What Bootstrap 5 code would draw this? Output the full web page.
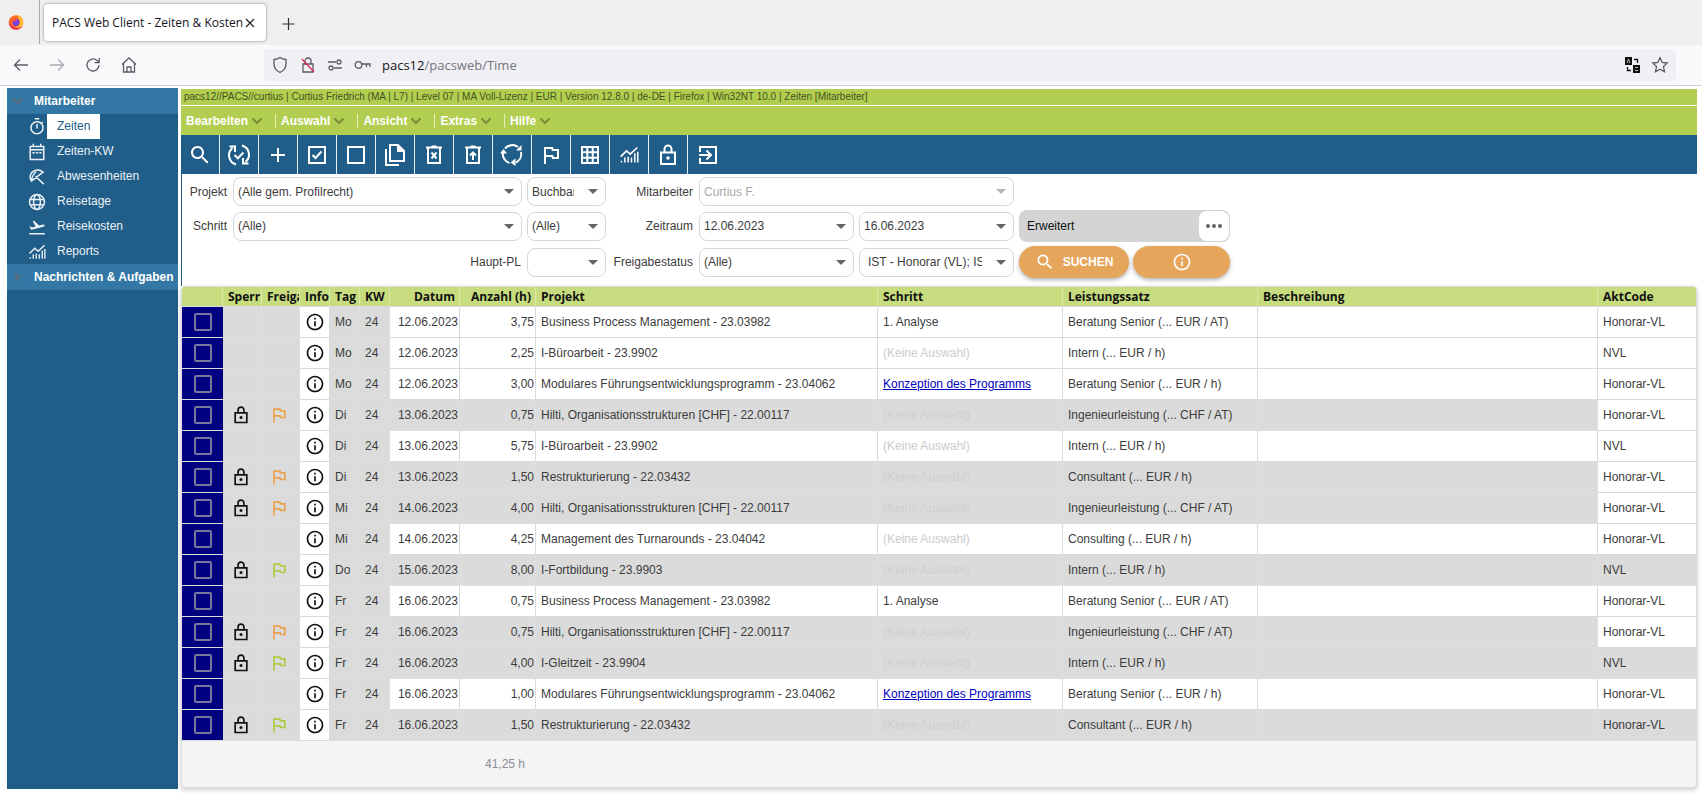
<!DOCTYPE html>
<html lang="de">
<head>
<meta charset="utf-8">
<meta name="viewport" content="width=device-width, initial-scale=1">
<title>PACS Web Client - Zeiten &amp; Kosten</title>
<link href="https://cdn.jsdelivr.net/npm/bootstrap@5.3.0/dist/css/bootstrap.min.css" rel="stylesheet">
<style>
  :root { --blue: #205d88; --blue-light: #3378a4; --lime: #b2ce50; --lime-head: #c6dc7e; --line: #dadada; --locked: #dbdbdb; --orange: #e5a55b; }
  body { font-family: "Liberation Sans", Arial, sans-serif; font-size: 12px; line-height: 16px; color: #3c3c3c; background: #fff; }
  svg { display: block; flex: none; }
  .ico { width: 24px; height: 24px; fill: currentColor; }
  .ico-20 { width: 20px; height: 20px; fill: currentColor; }
  .ln { fill: none; stroke: currentColor; stroke-width: 2; }
  .thin { fill: none; stroke: currentColor; stroke-width: 1.3; }
  button { font: inherit; color: inherit; background: none; border: 0; padding: 0; }

  .tabstrip { height: 45px; background: #efefef; font-family: "Open Sans", "Noto Sans", sans-serif; color: #15141a; }
  .tabstrip-pin { width: 40px; height: 44px; padding-left: 8px; border-right: 1px solid #aaa; }
  .browser-tab { width: 222px; height: 37px; margin: 4px 0 0 4px; padding: 0 11px 0 8px; background: #fff; border-radius: 4px; box-shadow: 0 0 3px rgba(0,0,0,.45); }
  .urlrow { height: 41px; background: #f9f9fb; border-bottom: 1px solid #cfcfdb; padding: 0 26px 0 12px; color: #5b5b66; }
  .urlrow-nav { width: 252px; gap: 18px; }
  .urlbar { height: 32px; background: #f0f0f4; border-radius: 4px; padding: 0 7px; gap: 11px; }
  .addr { font-family: "Open Sans", "Noto Sans", sans-serif; font-size: 13px; color: #75757f; }
  .addr b { font-weight: 400; color: #15141a; }

  .workspace { gap: 3px; padding: 2px 5px 7px 7px; }
  .side { width: 171px; background: var(--blue); color: #fff; }
  .side-group { height: 26px; width: 100%; background: var(--blue-light); font-weight: 700; white-space: nowrap; padding-left: 3px; }
  .side-group svg { color: #5d6b7a; margin-right: 8px; }
  .side-item { height: 25px; padding-left: 21px; color: #e9f1f6; text-decoration: none; }
  .side-item span { padding: 0 10px; line-height: 25px; }
  .side-item.active span { background: #fff; color: var(--blue); }
  .side-item svg { width: 18px; height: 18px; margin-right: 1px; }

  .pane { min-width: 0; padding-top: 1px; }
  .statusline { height: 16px; background: var(--lime); color: #44521f; font-size: 10px; line-height: 16px; padding-left: 3px; white-space: nowrap; margin-bottom: 1px; }
  .menubar { height: 29px; background: var(--lime); color: #fff; font-weight: 700; }
  .menubar button { height: 14px; line-height: 14px; font-weight: 700; padding: 0 12px 0 5px; border-right: 1px solid #e3eeb9; }
  .menubar button:last-child { border: 0; }
  .menubar svg { margin-left: 3px; color: #7b8d3a; }
  .toolstrip { height: 39px; background: var(--blue); color: #fff; }
  .toolstrip button { width: 39px; border-right: 1px solid #e8eff3; }
  .toolstrip button:last-child { border: 0; }

  .filters { display: grid; grid-template-columns: 46px 289px 79px 83px 155px 155px 211px; gap: 4px 5px; padding: 3px 0 8px 0; align-items: center; border-left: 1px solid #205d88; }
  .filters label { text-align: right; white-space: nowrap; padding-right: 1px; }
  .filters .two-wide { grid-column: span 2; }
  .filters .form-select { height: 29px; font-size: 12px; line-height: 16px; padding: 0 31px 0 4px; border: 1px solid #d4d7dc; border-radius: 8px; color: #3c3c3c; background-color: #fff; background-size: 10px 5px; background-position: right 7px center; text-overflow: clip;
    background-image: url("data:image/svg+xml,%3Csvg xmlns='http://www.w3.org/2000/svg' viewBox='0 0 10 5'%3E%3Cpath d='M0 0h10L5 5z' fill='%23666'/%3E%3C/svg%3E"); }
  .filters .form-select:disabled { color: #a9a9a9; opacity: 1; background-image: url("data:image/svg+xml,%3Csvg xmlns='http://www.w3.org/2000/svg' viewBox='0 0 10 5'%3E%3Cpath d='M0 0h10L5 5z' fill='%23b5b5b5'/%3E%3C/svg%3E"); }
  .extended { height: 32px; background: #d4d4d5; border-radius: 8px; padding: 1px 1px 1px 8px; color: #111; }
  .extended button { width: 30px; height: 30px; background: #fff; border-radius: 8px; color: #666; }
  .pill { height: 32px; border-radius: 16px; background: var(--orange); color: #fff; font-weight: 700; box-shadow: 0 2px 4px rgba(0,0,0,.3); }
  .pill-info { width: 97px; }

  .gridcard { border: 1px solid #d9dcdc; border-radius: 4px; background: #f4f4f4; box-shadow: 0 2px 5px rgba(0,0,0,.2); overflow: hidden; }
  .timegrid { table-layout: fixed; border-collapse: separate; border-spacing: 0; margin: 0; width: 100%; white-space: nowrap; color: #3c3c3c; }
  .w-tick { width: 41px; } .w-lock { width: 39px; } .w-flag { width: 38px; } .w-tiny { width: 30px; }
  .w-date { width: 70px; } .w-hours { width: 76px; } .w-project { width: 342px; } .w-step { width: 185px; } .w-rate { width: 195px; } .w-code { width: 98px; }
  .timegrid th { height: 20px; padding: 0 4px 0 5px; font: 700 12px/19px "Open Sans", "Noto Sans", sans-serif; color: #111; background: var(--lime-head); border-right: 1px solid #d9e8a9; border-bottom: 1px solid var(--line); overflow: hidden; }
  .timegrid th.snug { padding-right: 0; }
  .timegrid td { height: 31px; padding: 0 5px; background: #fff; border-right: 1px solid var(--line); border-bottom: 1px solid var(--line); vertical-align: middle; overflow: hidden; }
  .timegrid th:last-child, .timegrid td:last-child { border-right: 0; }
  .timegrid .numcell { text-align: right; padding: 0 1px; }
  .timegrid .fixedcell, .timegrid .is-locked .lockable { background: var(--locked); border-right-color: #dfdfdf; border-bottom-color: #dfdfdf; }
  .timegrid .tickcell { background: #000080; border-right: 0; padding: 0; }
  .timegrid .centercell { padding: 0; }
  .timegrid .fixedcell.centercell { padding-right: 3px; }
  .timegrid .centercell svg { margin: 0 auto; }
  .timegrid .faint { color: #cbcbcb; }
  .timegrid .is-locked .faint { color: #cfcfcf; }
  .timegrid a { color: #0000c0; }
  .timegrid input { display: block; appearance: none; width: 18px; height: 18px; margin: 0 auto; border: 2px solid #78789c; border-radius: 2px; }
  .flag-o { color: #eba04d; } .flag-g { color: #aecb45; }
  .ink { color: #111; }
  .total { height: 46px; line-height: 46px; color: #8b8f98; padding-left: 303px; }
</style>
</head>
<body>
<svg width="0" height="0" class="position-absolute" aria-hidden="true">
  <symbol id="i-search" viewBox="0 0 24 24"><path d="M15.500 14h-.79l-.28-.27C15.410 12.590 16 11.110 16 9.500 16 5.910 13.090 3 9.500 3S3 5.910 3 9.500 5.910 16 9.500 16c1.610 0 3.090-.59 4.230-1.570l.27.28v.79l5 4.990L20.490 19zm-6 0C7.010 14 5 11.990 5 9.500S7.010 5 9.500 5 14 7.010 14 9.500 11.990 14 9.500 14z"/></symbol>
  <symbol id="i-info" viewBox="0 0 24 24"><path d="M11 7h2v2h-2zm0 4h2v6h-2zm1-9C6.480 2 2 6.480 2 12s4.480 10 10 10 10-4.480 10-10S17.520 2 12 2zm0 18c-4.410 0-8-3.590-8-8s3.590-8 8-8 8 3.590 8 8-3.590 8-8 8z"/></symbol>
  <symbol id="i-lock" viewBox="0 0 24 24"><g class="ln"><path d="M5 9.500h14V21H5zM8.500 9V6a3.500 3.500 0 0 1 7 0v3"/></g><circle cx="12" cy="15" r="1.800"/></symbol>
  <symbol id="i-flag" viewBox="0 0 24 24"><path d="M12.360 6l.4 2H18v6h-3.360l-.4-2H7V6h5.360M14 4H5v17h2v-7h5.600l.4 2h7V6h-5.600L14 4z"/></symbol>
  <symbol id="i-chart" viewBox="0 0 24 24"><g class="ln"><path d="M2 14l7-7 4.500 4L22 3"/><path d="M3 21v-2M7 21v-6M11 21v-7M15 21v-6M19 21V10M22.500 21V8" stroke-width="1.800"/></g></symbol>
  <symbol id="i-down" viewBox="0 0 12 8"><path class="ln" d="M1.500 1.500L6 6l4.500-4.500"/></symbol>
</svg>

<div class="min-vh-100 d-flex flex-column">
  <header>
    <div class="tabstrip d-flex align-items-start">
      <div class="tabstrip-pin d-flex align-items-center">
        <svg width="16" height="16" viewBox="0 0 16 16"><circle cx="8" cy="8.500" r="7.300" fill="#ff6a2b"/><path d="M9 .5c3 1 6.500 4 6.300 8-.2 4-3.300 7.200-7.300 7.300C4 15.800 2 13 1.500 11c3 3 8 3 10-.5 1.600-3-.5-6-2.500-10z" fill="#ffbd2f"/><path d="M.8 9c.5 4.500 5 8 10 6.200 2-.8 3.500-2.200 4-4-2 2.500-5 3.300-8 2C4 12 2 10.500.8 9z" fill="#f0315b"/><circle cx="8" cy="8.500" r="3.400" fill="#7a3fe0"/><path d="M4 6c1-1.500 4-1.500 5 .2-1.500 0-2 .8-3 1.800z" fill="#ff4f45"/></svg>
      </div>
      <div class="browser-tab d-flex align-items-center justify-content-between text-nowrap">
        <span>PACS Web Client - Zeiten &amp; Kosten</span>
        <button aria-label="Tab schließen"><svg width="10" height="10" viewBox="0 0 10 10"><path d="M1 1l8 8M9 1L1 9" fill="none" stroke="#222" stroke-width="1.200"/></svg></button>
      </div>
      <button class="ms-3 mt-3" aria-label="Neuer Tab"><svg width="13" height="15" viewBox="0 0 13 15"><path d="M6.500 2v12M.5 8h12" stroke="#333" stroke-width="1.200"/></svg></button>
    </div>
    <div class="urlrow d-flex align-items-center">
      <nav class="urlrow-nav d-flex align-items-center flex-shrink-0" aria-label="Browser">
        <button aria-label="Zurück"><svg width="18" height="18" viewBox="0 0 18 18" class="thin"><path d="M16 9H2.500M8 3.500L2.500 9 8 14.500"/></svg></button>
        <button aria-label="Vor" class="opacity-50"><svg width="18" height="18" viewBox="0 0 18 18" class="thin"><path d="M2 9h13.500M10 3.500L15.500 9 10 14.500"/></svg></button>
        <button aria-label="Neu laden"><svg width="18" height="18" viewBox="0 0 18 18" class="thin"><path d="M15 9a6 6 0 1 1-2-4.500L14.500 6M15.200 2v4.700h-4.700"/></svg></button>
        <button aria-label="Startseite"><svg width="18" height="18" viewBox="0 0 18 18" class="thin"><path d="M2 8.500L9 2l7 6.500M3.500 7.500V16h11V7.500M7 16v-5h4v5"/></svg></button>
      </nav>
      <div class="urlbar d-flex align-items-center flex-grow-1">
        <svg width="18" height="18" viewBox="0 0 18 18" class="thin"><path d="M9 1.500c2 1.300 4 1.800 6 2v4C15 12 12.500 15 9 16.500 5.500 15 3 12 3 7.500v-4c2-.2 4-.7 6-2z"/></svg>
        <svg width="16" height="18" viewBox="0 0 16 18" class="thin"><path d="M3 8h10v8H3zM5 8V5a3 3 0 0 1 6 0v3"/><path d="M2 3l12 13" stroke="#e22850"/></svg>
        <svg width="16" height="18" viewBox="0 0 16 18" class="thin"><path d="M1 6h8M7 12h8"/><circle cx="12" cy="6" r="2"/><circle cx="4" cy="12" r="2"/></svg>
        <svg width="17" height="18" viewBox="0 0 17 18" class="thin"><circle cx="4.500" cy="9" r="3.300"/><path d="M8 8h8v3M12.500 8v3"/></svg>
        <div class="addr flex-grow-1"><b>pacs12</b>/pacsweb/Time</div>
        <svg width="15" height="16" viewBox="0 0 15 16"><path d="M0 0h7v8H0zM8 8h7v8H8z" fill="#111"/><path d="M2 6l1.500-4L5 6M10 10.500h3M10 13.500h3" stroke="#bbb" fill="none"/><path d="M9 2.500h3.500V6M2.500 10v3.500H6" stroke="#111" stroke-width="1.300" fill="none"/></svg>
        <svg width="18" height="18" viewBox="0 0 18 18" class="thin"><path d="M9 1.800l2.200 4.700 5 .6-3.700 3.500 1 5.200L9 13.300l-4.500 2.500 1-5.200L1.800 7.100l5-.6z"/></svg>
      </div>
    </div>
  </header>

  <div class="workspace d-flex flex-grow-1">
    <aside class="side flex-shrink-0">
      <button class="side-group d-flex align-items-center"><svg width="16" height="10" viewBox="0 0 16 10"><path class="ln" d="M3 2.500l4.500 4.500L12 2.500"/></svg>Mitarbeiter</button>
      <nav aria-label="Mitarbeiter">
        <a href="#" class="side-item d-flex align-items-center active"><svg class="ico" viewBox="0 0 24 24"><path d="M15 0H9v2h6V0zm-4 14h2V8h-2v6zm8.030-6.610l1.420-1.420c-.43-.51-.9-.99-1.410-1.410l-1.420 1.420C16.070 4.740 14.120 4 12 4c-4.970 0-9 4.030-9 9s4.020 9 9 9 9-4.030 9-9c0-2.120-.74-4.070-1.970-5.610zM12 20c-3.870 0-7-3.130-7-7s3.130-7 7-7 7 3.130 7 7-3.130 7-7 7z"/></svg><span>Zeiten</span></a>
        <a href="#" class="side-item d-flex align-items-center"><svg class="ico" viewBox="0 0 24 24"><path class="ln" d="M3 4.500h18V22H3zM3 9h18M7 1v4M17 1v4"/><path d="M6 12h3v2H6zM10.500 12h3v2h-3zM15 12h3v2h-3z"/></svg><span>Zeiten-KW</span></a>
        <a href="#" class="side-item d-flex align-items-center"><svg class="ico" viewBox="0 0 24 24"><path class="ln" d="M4.500 17.500C1.500 12 3 6 8 4c4-2 9-1 12 1.500zM10 11l11 10.500M4.500 17.500C5 12 7 8 11 5"/></svg><span>Abwesenheiten</span></a>
        <a href="#" class="side-item d-flex align-items-center"><svg class="ico" viewBox="0 0 24 24"><g class="ln"><circle cx="12" cy="12" r="10"/><ellipse cx="12" cy="12" rx="4.500" ry="10"/><path d="M3 8.500h18M3 15.500h18"/></g></svg><span>Reisetage</span></a>
        <a href="#" class="side-item d-flex align-items-center"><svg class="ico" viewBox="0 0 24 24"><path d="M1.500 20h21v2h-21zm20.570-10.360c-.21-.8-1.040-1.280-1.840-1.060L14.920 10l-6.900-6.430-1.930.51 4.140 7.170-4.970 1.330-1.970-1.540-1.450.39 2.590 4.490 1.600-.43 5.310-1.420 4.350-1.160L21 11.490c.81-.23 1.280-1.050 1.070-1.850z"/></svg><span>Reisekosten</span></a>
        <a href="#" class="side-item d-flex align-items-center"><svg class="ico"><use href="#i-chart"/></svg><span>Reports</span></a>
      </nav>
      <button class="side-group d-flex align-items-center"><svg width="16" height="10" viewBox="0 0 16 10"><path class="ln" d="M5 1l4 4-4 4"/></svg>Nachrichten &amp; Aufgaben</button>
    </aside>

    <main class="pane flex-grow-1">
      <div class="statusline">pacs12//PACS//curtius | Curtius Friedrich (MA | L7) | Level 07 | MA Voll-Lizenz | EUR | Version 12.8.0 | de-DE | Firefox | Win32NT 10.0 | Zeiten [Mitarbeiter]</div>
      <nav class="menubar d-flex align-items-center" aria-label="Menü">
        <button class="d-flex align-items-center">Bearbeiten<svg width="12" height="8"><use href="#i-down"/></svg></button>
        <button class="d-flex align-items-center">Auswahl<svg width="12" height="8"><use href="#i-down"/></svg></button>
        <button class="d-flex align-items-center">Ansicht<svg width="12" height="8"><use href="#i-down"/></svg></button>
        <button class="d-flex align-items-center">Extras<svg width="12" height="8"><use href="#i-down"/></svg></button>
        <button class="d-flex align-items-center">Hilfe<svg width="12" height="8"><use href="#i-down"/></svg></button>
      </nav>
      <div class="toolstrip d-flex" role="toolbar" aria-label="Werkzeuge">
        <button class="d-flex align-items-center justify-content-center" aria-label="Suchen"><svg class="ico"><use href="#i-search"/></svg></button>
        <button class="d-flex align-items-center justify-content-center" aria-label="Aktualisieren"><svg class="ico" viewBox="0 0 24 24"><g class="ln"><path d="M9 21.500A9.500 9.500 0 0 1 5.500 5M15 2.500A9.500 9.500 0 0 1 18.500 19M2.500 3.500H8v5.500M21.500 20.500H16V15M7.500 12l3.300 3.300L16.500 9.500"/></g></svg></button>
        <button class="d-flex align-items-center justify-content-center" aria-label="Neu"><svg class="ico" viewBox="0 0 24 24"><path d="M19 13h-6v6h-2v-6H5v-2h6V5h2v6h6v2z"/></svg></button>
        <button class="d-flex align-items-center justify-content-center" aria-label="Alle auswählen"><svg class="ico" viewBox="0 0 24 24"><path class="ln" d="M4 4h16v16H4zM7.500 12l3 3 6-6.500"/></svg></button>
        <button class="d-flex align-items-center justify-content-center" aria-label="Auswahl aufheben"><svg class="ico" viewBox="0 0 24 24"><path class="ln" d="M4 4h16v16H4z"/></svg></button>
        <button class="d-flex align-items-center justify-content-center" aria-label="Kopieren"><svg class="ico" viewBox="0 0 24 24"><path class="ln" d="M7 2h8l6 6v10H7zM3 6v16h13"/><path d="M14 2v7h7z"/></svg></button>
        <button class="d-flex align-items-center justify-content-center" aria-label="Löschen"><svg class="ico" viewBox="0 0 24 24"><path class="ln" d="M4 4.500h16M6 4.500V20h12V4.500M9.500 3.500h5M9.500 9.500l5 6M14.500 9.500l-5 6"/></svg></button>
        <button class="d-flex align-items-center justify-content-center" aria-label="Wiederherstellen"><svg class="ico" viewBox="0 0 24 24"><path class="ln" d="M4 4.500h16M6 4.500V20h12V4.500M9.500 3.500h5M12 17V9.500M9 12.500l3-3 3 3"/></svg></button>
        <button class="d-flex align-items-center justify-content-center" aria-label="Umwandeln"><svg class="ico" viewBox="0 0 24 24"><path class="ln" d="M5 5.500A9.500 9.500 0 0 1 18 4M21 9a9.500 9.500 0 0 1-5 10.500M9.500 20A9.500 9.500 0 0 1 3 9"/><path d="M16 7.500h5.500V2zM0 10.500L3.500 6 7 10.500zM15.500 15.500v7.500l-5-3.500z"/></svg></button>
        <button class="d-flex align-items-center justify-content-center" aria-label="Freigabe"><svg class="ico"><use href="#i-flag"/></svg></button>
        <button class="d-flex align-items-center justify-content-center" aria-label="Tabelle"><svg class="ico" viewBox="0 0 24 24"><path class="ln" d="M4 4h16v16H4zM4 9.300h16M4 14.700h16M9.300 4v16M14.700 4v16"/></svg></button>
        <button class="d-flex align-items-center justify-content-center" aria-label="Auswertung"><svg class="ico-20"><use href="#i-chart"/></svg></button>
        <button class="d-flex align-items-center justify-content-center" aria-label="Sperren"><svg class="ico"><use href="#i-lock"/></svg></button>
        <button class="d-flex align-items-center justify-content-center" aria-label="Beenden"><svg class="ico" viewBox="0 0 24 24"><path class="ln" d="M4 9V4h16v16H4v-5M3 12h11M10.500 7.500L15 12l-4.500 4.500"/></svg></button>
      </div>

      <form class="filters">
        <label for="f-projekt">Projekt</label>
        <select id="f-projekt" class="form-select"><option>(Alle gem. Profilrecht)</option></select>
        <select class="form-select" aria-label="Buchbarkeit"><option>Buchbar</option></select>
        <label for="f-ma">Mitarbeiter</label>
        <select id="f-ma" class="form-select two-wide" disabled><option>Curtius F.</option></select>
        <span></span>

        <label for="f-schritt">Schritt</label>
        <select id="f-schritt" class="form-select"><option>(Alle)</option></select>
        <select class="form-select" aria-label="Schrittstatus"><option>(Alle)</option></select>
        <label for="f-von">Zeitraum</label>
        <select id="f-von" class="form-select"><option>12.06.2023</option></select>
        <select class="form-select" aria-label="Zeitraum bis"><option>16.06.2023</option></select>
        <div class="extended d-flex align-items-center justify-content-between">Erweitert
          <button type="button" class="d-flex align-items-center justify-content-center" aria-label="Mehr"><svg width="16" height="4" viewBox="0 0 16 4" fill="currentColor"><circle cx="2" cy="2" r="2"/><circle cx="8" cy="2" r="2"/><circle cx="14" cy="2" r="2"/></svg></button>
        </div>

        <span></span>
        <label for="f-pl">Haupt-PL</label>
        <select id="f-pl" class="form-select"><option></option></select>
        <label for="f-frei">Freigabestatus</label>
        <select id="f-frei" class="form-select"><option>(Alle)</option></select>
        <select class="form-select ps-2" aria-label="Buchungsart"><option>IST - Honorar (VL); IST - NVL</option></select>
        <div class="d-flex gap-1">
          <button type="button" class="pill d-flex align-items-center justify-content-center flex-grow-1 gap-2"><svg class="ico-20"><use href="#i-search"/></svg>SUCHEN</button>
          <button type="button" class="pill pill-info d-flex align-items-center justify-content-center" aria-label="Information"><svg class="ico-20"><use href="#i-info"/></svg></button>
        </div>
      </form>

      <section class="gridcard">
        <table class="timegrid">
          <colgroup><col class="w-tick"><col class="w-lock"><col class="w-flag"><col class="w-tiny"><col class="w-tiny"><col class="w-tiny"><col class="w-date"><col class="w-hours"><col class="w-project"><col class="w-step"><col class="w-rate"><col><col class="w-code"></colgroup>
          <thead><tr><th></th><th class="snug">Sperr</th><th class="snug">Freiga</th><th class="snug">Info</th><th class="snug">Tag</th><th>KW</th><th class="text-end">Datum</th><th class="text-end">Anzahl (h)</th><th>Projekt</th><th>Schritt</th><th>Leistungssatz</th><th>Beschreibung</th><th>AktCode</th></tr></thead>
          <tbody id="rows"></tbody>
        </table>
        <div class="total">41,25 h</div>
      </section>
    </main>
  </div>
</div>

<script>
  const P = {
    bpm: 'Business Process Management - 23.03982', bue: 'I-Büroarbeit - 23.9902',
    mod: 'Modulares Führungsentwicklungsprogramm - 23.04062', hil: 'Hilti, Organisationsstrukturen [CHF] - 22.00117',
    res: 'Restrukturierung - 22.03432', man: 'Management des Turnarounds - 23.04042',
    fort: 'I-Fortbildung - 23.9903', glz: 'I-Gleitzeit - 23.9904'
  };
  // flag (o = orange, g = green, empty = open), day, date, hours, project, step, rate, code, code locked
  const data = [
    ['', 'Mo', 12, '3,75', P.bpm, 'A', 'Beratung Senior (... EUR / AT)', 'Honorar-VL', 0],
    ['', 'Mo', 12, '2,25', P.bue, '', 'Intern (... EUR / h)', 'NVL', 0],
    ['', 'Mo', 12, '3,00', P.mod, 'K', 'Beratung Senior (... EUR / h)', 'Honorar-VL', 0],
    ['o', 'Di', 13, '0,75', P.hil, '', 'Ingenieurleistung (... CHF / AT)', 'Honorar-VL', 0],
    ['', 'Di', 13, '5,75', P.bue, '', 'Intern (... EUR / h)', 'NVL', 0],
    ['o', 'Di', 13, '1,50', P.res, '', 'Consultant (... EUR / h)', 'Honorar-VL', 0],
    ['o', 'Mi', 14, '4,00', P.hil, '', 'Ingenieurleistung (... CHF / AT)', 'Honorar-VL', 0],
    ['', 'Mi', 14, '4,25', P.man, '', 'Consulting (... EUR / h)', 'Honorar-VL', 0],
    ['g', 'Do', 15, '8,00', P.fort, '', 'Intern (... EUR / h)', 'NVL', 1],
    ['', 'Fr', 16, '0,75', P.bpm, 'A', 'Beratung Senior (... EUR / AT)', 'Honorar-VL', 0],
    ['o', 'Fr', 16, '0,75', P.hil, '', 'Ingenieurleistung (... CHF / AT)', 'Honorar-VL', 0],
    ['g', 'Fr', 16, '4,00', P.glz, '', 'Intern (... EUR / h)', 'NVL', 1],
    ['', 'Fr', 16, '1,00', P.mod, 'K', 'Beratung Senior (... EUR / h)', 'Honorar-VL', 0],
    ['g', 'Fr', 16, '1,50', P.res, '', 'Consultant (... EUR / h)', 'Honorar-VL', 1]
  ];
  const icon = (name, cls, size) => `<svg class="${cls}" width="${size}" height="${size}" fill="currentColor"><use href="#i-${name}"/></svg>`;
  const step = s => s === 'A' ? '1. Analyse' : s === 'K' ? '<a href="#">Konzeption des Programms</a>' : '<span class="faint">(Keine Auswahl)</span>';
  document.getElementById('rows').innerHTML = data.map(([flag, day, date, hours, project, s, rate, code, codeLocked], i) => `
    <tr class="${flag ? 'is-locked' : ''}">
      <td class="tickcell"><input type="checkbox" aria-label="Zeile ${i + 1}"></td>
      <td class="fixedcell centercell">${flag ? icon('lock', 'ink', 20) : ''}</td>
      <td class="fixedcell centercell">${flag ? icon('flag', 'flag-' + flag, 20) : ''}</td>
      <td class="centercell">${icon('info', 'ink', 20)}</td>
      <td class="fixedcell">${day}</td><td class="fixedcell">24</td>
      <td class="numcell lockable">${date}.06.2023</td><td class="numcell lockable">${hours}</td>
      <td class="lockable">${project}</td><td class="lockable">${step(s)}</td>
      <td class="lockable">${rate}</td><td class="lockable"></td>
      <td class="${codeLocked ? 'lockable' : ''}">${code}</td>
    </tr>`).join('');
</script>
<script src="https://cdn.jsdelivr.net/npm/bootstrap@5.3.0/dist/js/bootstrap.bundle.min.js"></script>
</body>
</html>
